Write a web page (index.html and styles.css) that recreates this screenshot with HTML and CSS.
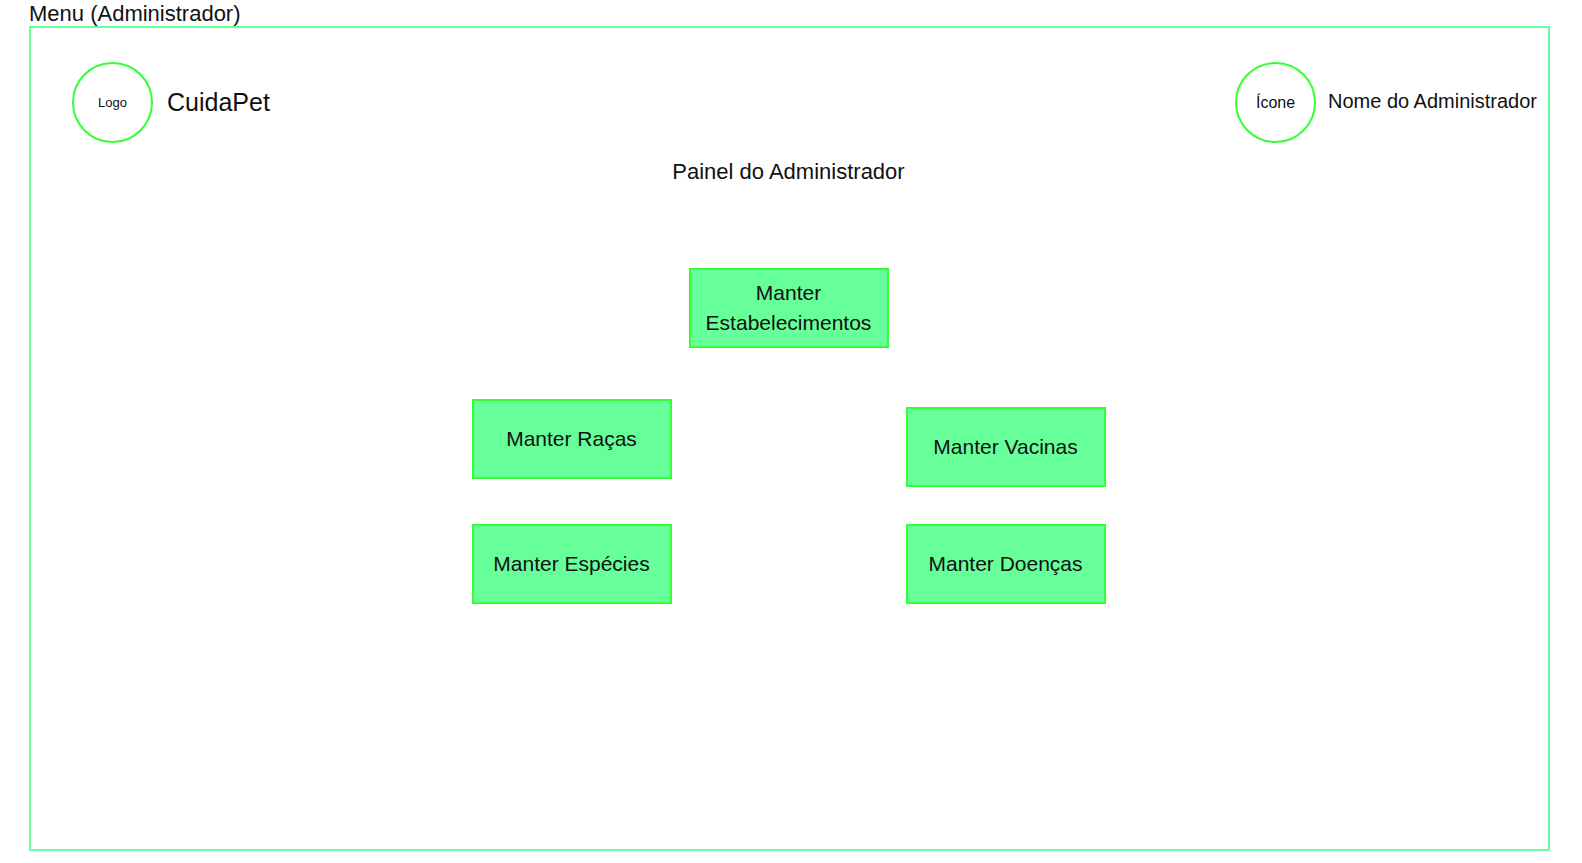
FILE: index.html
```html
<!DOCTYPE html>
<html lang="pt-BR">
<head>
<meta charset="utf-8">
<title>Menu (Administrador)</title>
<link rel="stylesheet" href="styles.css">
</head>
<body>
<h1 class="page-title">Menu (Administrador)</h1>
<div class="screen">
  <header class="topbar">
    <div class="brand">
      <span class="circle circle-logo">Logo</span>
      <span class="brand-name">CuidaPet</span>
    </div>
    <div class="user">
      <span class="circle circle-icon">Ícone</span>
      <span class="user-name">Nome do Administrador</span>
    </div>
  </header>
  <main class="panel">
    <h2 class="panel-title">Painel do Administrador</h2>
    <nav class="menu" aria-label="Painel do Administrador">
      <button class="action" type="button">Manter Estabelecimentos</button>
      <div class="columns">
        <div class="column column-left">
          <button class="action" type="button">Manter Raças</button>
          <button class="action" type="button">Manter Espécies</button>
        </div>
        <div class="column column-right">
          <button class="action" type="button">Manter Vacinas</button>
          <button class="action" type="button">Manter Doenças</button>
        </div>
      </div>
    </nav>
  </main>
</div>
</body>
</html>
```

FILE: styles.css
```css
* {
  box-sizing: border-box;
}

body {
  display: flex;
  flex-direction: column;
  min-height: 100vh;
  margin: 0;
  padding: 1px 32px 12px 29px;
  background: #fff;
  color: #111;
  font-family: "Liberation Sans", Arial, sans-serif;
}

.page-title,
.panel-title {
  margin: 0;
  font-size: 22px;
  font-weight: 400;
  line-height: 25px;
}

.screen {
  flex: 1;
  border: 2px solid #6f9;
}

.topbar {
  display: flex;
  justify-content: space-between;
  padding: 34px 11px 0 41px;
}

.brand,
.user {
  display: flex;
  align-items: center;
}

.brand {
  gap: 14px;
}

.user {
  gap: 12px;
}

.circle {
  display: flex;
  align-items: center;
  justify-content: center;
  width: 81px;
  height: 81px;
  border: 2px solid #3f3;
  border-radius: 50%;
}

.circle-logo {
  font-size: 13px;
}

.circle-icon {
  font-size: 16px;
}

.brand-name {
  font-size: 25px;
}

.user-name {
  padding-bottom: 2px;
  font-size: 20px;
}

.panel {
  display: flex;
  flex-direction: column;
  align-items: center;
  padding: 16px 2px 24px 0;
}

.menu {
  display: flex;
  flex-direction: column;
  align-items: center;
  gap: 51px;
  margin-top: 84px;
}

.columns {
  display: flex;
  align-items: flex-end;
  gap: 234px;
}

.column {
  display: flex;
  flex-direction: column;
}

.column-left {
  gap: 45px;
}

.column-right {
  gap: 37px;
}

.action {
  width: 200px;
  min-height: 80px;
  padding: 0 12px;
  border: 2px solid #3f3;
  background: #6f9;
  color: #111;
  font-family: inherit;
  font-size: 21px;
  line-height: 30px;
  cursor: pointer;
}
```
